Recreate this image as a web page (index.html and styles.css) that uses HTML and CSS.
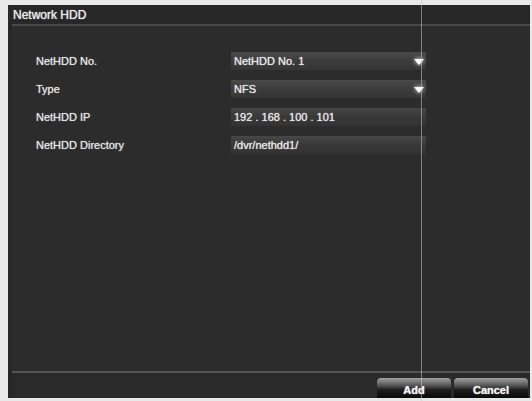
FILE: index.html
```html
<!DOCTYPE html>
<html>
<head>
<meta charset="utf-8">
<link rel="stylesheet" href="styles.css">
</head>
<body>
<div class="panel">
  <div class="titlebar">Network HDD</div>
  <div class="content">
    <div class="row">
      <div class="label">NetHDD No.</div>
      <div class="field select">NetHDD No. 1<span class="arrow"></span></div>
    </div>
    <div class="row">
      <div class="label">Type</div>
      <div class="field select">NFS<span class="arrow"></span></div>
    </div>
    <div class="row">
      <div class="label">NetHDD IP</div>
      <div class="field">192 . 168 . 100 . 101</div>
    </div>
    <div class="row">
      <div class="label">NetHDD Directory</div>
      <div class="field">/dvr/nethdd1/</div>
    </div>
  </div>
  <div class="footer">
    <button class="btn">Add</button>
    <button class="btn">Cancel</button>
  </div>
</div>
<div class="vline"></div>
</body>
</html>
```
FILE: styles.css
```css
html, body {
  margin: 0;
  padding: 0;
}
body {
  width: 532px;
  height: 401px;
  background: #e9e9e9;
  font-family: "Liberation Sans", Arial, sans-serif;
  position: relative;
  overflow: hidden;
}
.panel {
  margin: 5px 2px 0 8px;
  height: 393px;
  background: #2c2c2c;
  border-left: 4px solid #262826;
  box-sizing: border-box;
  display: flex;
  flex-direction: column;
}
.titlebar {
  height: 19px;
  background: #272727;
  color: #e6e6e6;
  font-size: 12px;
  padding-left: 1px;
  line-height: 20px;
  border-bottom: 2px solid #4a4a4a;
  text-shadow: 0 0 1px #fff;
}
.content {
  flex: 1;
  padding-top: 26px;
  display: flex;
  flex-direction: column;
  gap: 10px;
}
.row {
  display: flex;
  align-items: center;
  height: 18px;
}
.label {
  width: 195px;
  padding-left: 24px;
  color: #e4e4e4;
  font-size: 11px;
  text-shadow: 0 0 1px #ccc;
}
.field {
  width: 195px;
  height: 18px;
  line-height: 18px;
  box-sizing: border-box;
  padding-left: 3px;
  background: linear-gradient(#474747, #383838 50%, #333333);
  color: #e8e8e8;
  font-size: 11px;
  text-shadow: 0 0 1px #ddd;
  position: relative;
}
.select {
  background: linear-gradient(#4a4a4a, #3c3c3c 50%, #353535);
}
.arrow {
  position: absolute;
  right: 2px;
  top: 7px;
  width: 0;
  height: 0;
  border-left: 5px solid transparent;
  border-right: 5px solid transparent;
  border-top: 6px solid #ffffff;
  filter: drop-shadow(0 0 2px #fff);
}
.footer {
  height: 25px;
  border-top: 2px solid #555;
  background: #2a2a2a;
  display: flex;
  justify-content: flex-end;
  align-items: flex-end;
  gap: 3px;
  padding-right: 2px;
}
.btn {
  width: 74px;
  height: 20px;
  margin: 0;
  border: 0;
  border-radius: 4px 4px 0 0;
  background: linear-gradient(#a0a0a0, #5a5a5a 35%, #1c1c1c 60%, #0a0a0a);
  color: #f0f0f0;
  font-family: "Liberation Sans", Arial, sans-serif;
  font-size: 11px;
  font-weight: bold;
  padding: 4px 0 0 0;
  text-shadow: 0 0 1px #fff;
}
.vline {
  position: absolute;
  left: 421px;
  top: 0;
  width: 1px;
  height: 401px;
  background: rgba(200, 200, 200, 0.55);
}
```
